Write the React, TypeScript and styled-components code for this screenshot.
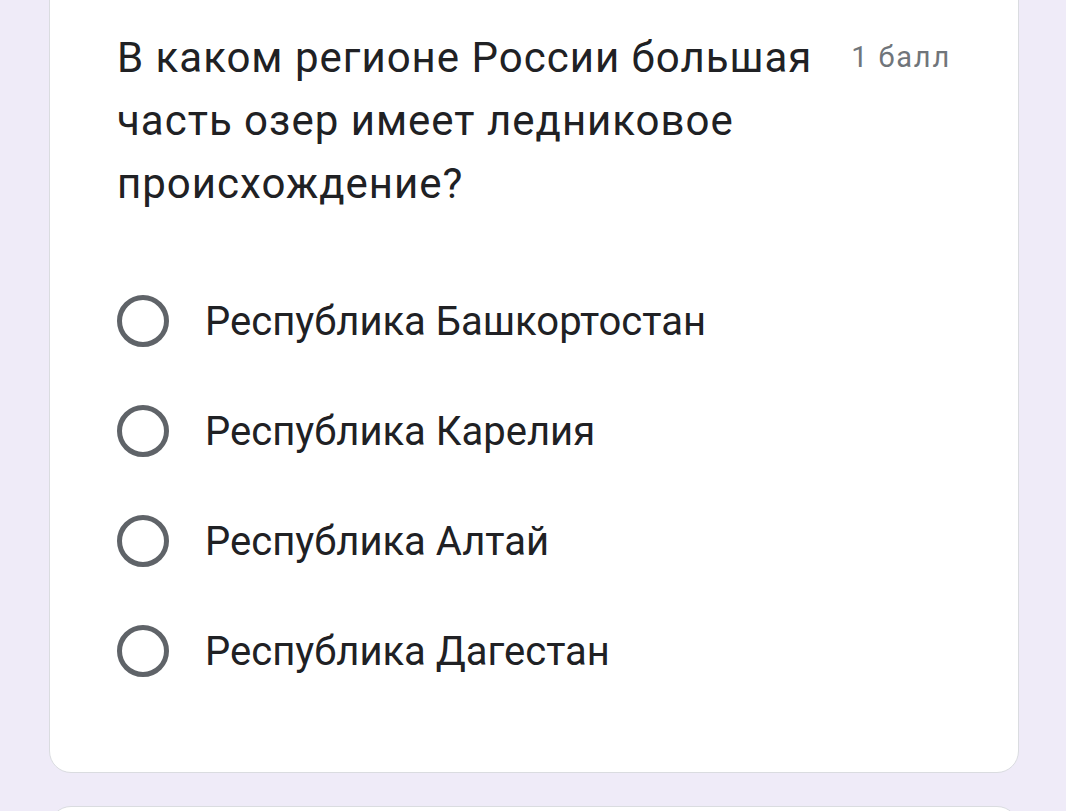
import React from "react";
import styled, { createGlobalStyle } from "styled-components";

const Global = createGlobalStyle`
  html, body {
    margin: 0;
    padding: 0;
    background: #efebf8;
    font-family: Roboto, "Noto Sans", Arial, sans-serif;
  }
`;

const Page = styled.div`
  display: flex;
  flex-direction: column;
  gap: 33px;
  padding: 0 47px 0 49px;
  height: 811px;
  overflow: hidden;
`;

const Card = styled.div<{ $cutTop?: boolean }>`
  background: #fff;
  border: 1.5px solid #dadce0;
  border-radius: 22px;
  margin-top: ${(p) => (p.$cutTop ? "-30px" : "0")};
  padding: ${(p) => (p.$cutTop ? "55px" : "30px")} 67px 66px 67px;
  flex-shrink: 0;
`;

const Header = styled.div`
  display: flex;
  align-items: flex-start;
  gap: 34px;
`;

const Question = styled.div`
  flex: 1;
  font-size: 42px;
  line-height: 63px;
  letter-spacing: 1px;
  color: #202124;
`;

const Points = styled.div`
  font-size: 29px;
  line-height: 63px;
  letter-spacing: 1.8px;
  color: #70757a;
  white-space: nowrap;
`;

const Options = styled.div`
  display: flex;
  flex-direction: column;
  margin-top: 51px;
`;

const Option = styled.label`
  display: flex;
  align-items: center;
  height: 110px;
  gap: 36px;
  cursor: pointer;
`;

const Radio = styled.span`
  width: 52px;
  height: 52px;
  box-sizing: border-box;
  border: 5px solid #5f6368;
  border-radius: 50%;
  flex-shrink: 0;
`;

const OptionText = styled.span`
  font-size: 40px;
  color: #202124;
`;

const options = [
  "Республика Башкортостан",
  "Республика Карелия",
  "Республика Алтай",
  "Республика Дагестан",
];

export default function App() {
  return (
    <>
      <Global />
      <Page>
        <Card $cutTop>
          <Header>
            <Question>
              В каком регионе России большая часть озер имеет ледниковое происхождение?
            </Question>
            <Points>1 балл</Points>
          </Header>
          <Options>
            {options.map((o) => (
              <Option key={o}>
                <Radio />
                <OptionText>{o}</OptionText>
              </Option>
            ))}
          </Options>
        </Card>
        <Card style={{ height: 200 }} />
      </Page>
    </>
  );
}
